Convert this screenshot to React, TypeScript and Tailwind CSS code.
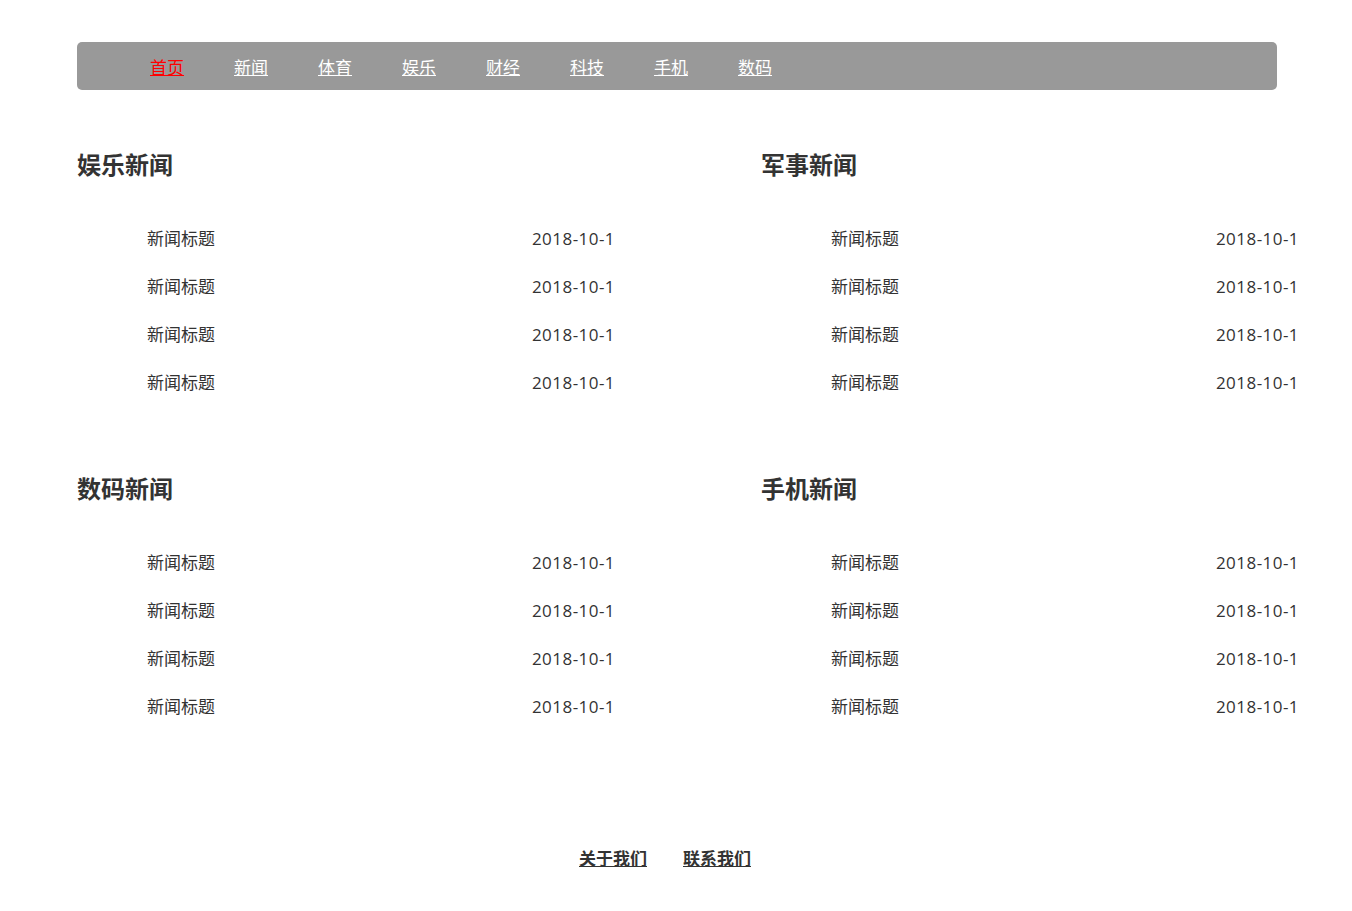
const navItems = ['首页', '新闻', '体育', '娱乐', '财经', '科技', '手机', '数码'];

const sections = ['娱乐新闻', '军事新闻', '数码新闻', '手机新闻'];

function NewsBlock({ title, first }: { title: string; first: boolean }) {
  return (
    <div className={first ? 'mt-[51px]' : 'mt-[58px]'}>
      <h2 className="text-[24px] font-bold leading-[48px] text-[#333]">{title}</h2>
      <ul className="mt-[26px] w-[538px] pl-[70px]">
        {[0, 1, 2, 3].map((i) => (
          <li key={i} className="flex justify-between text-[17px] leading-[48px] text-[#333]">
            <span>新闻标题</span>
            <span className="tracking-[0.45px]">2018-10-1</span>
          </li>
        ))}
      </ul>
    </div>
  );
}

export default function App() {
  return (
    <div
      className="min-h-screen bg-white"
      style={{ fontFamily: '"Open Sans", "Noto Sans CJK SC", sans-serif' }}
    >
      <div className="mx-[77px] pt-[42px]">
        <nav className="flex h-12 w-[1200px] items-center gap-[50px] rounded-[5px] bg-[#999] pl-[73px] pt-[3px] text-[17px]">
          {navItems.map((n, i) => (
            <a key={n} href="#" className={`underline ${i === 0 ? 'text-[#f00]' : 'text-white'}`}>
              {n}
            </a>
          ))}
        </nav>
        <div className="grid grid-cols-[684px_538px]">
          {sections.map((s, i) => (
            <NewsBlock key={s} title={s} first={i < 2} />
          ))}
        </div>
      </div>
      <footer className="mt-[104px] flex w-[1330px] justify-center gap-[36px] pb-[20px] text-[17px] font-bold leading-[48px] text-[#333]">
        <a href="#" className="underline">关于我们</a>
        <a href="#" className="underline">联系我们</a>
      </footer>
    </div>
  );
}
